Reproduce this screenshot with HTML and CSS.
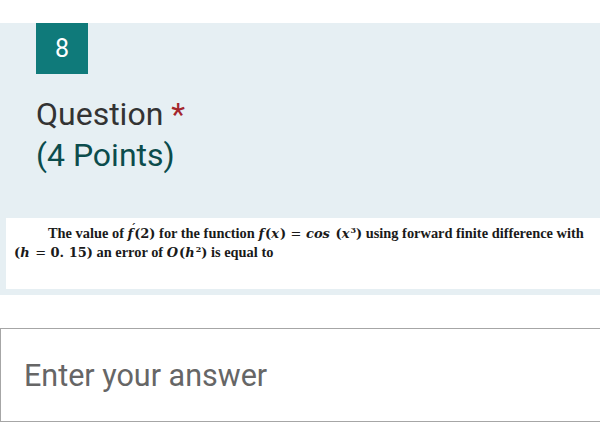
FILE: index.html
```html
<!DOCTYPE html>
<html>
<head>
<meta charset="utf-8">
<link rel="stylesheet" href="styles.css">
</head>
<body>
<div class="panel">
  <div class="badge">8</div>
  <div class="title">
    <div class="q">Question <span class="req">*</span></div>
    <div class="pts">(4 Points)</div>
  </div>
  <div class="image">
    <p class="math">The value of <span class="m"><i class="acc">f</i>(2)</span> for the function <span class="m"><i>f</i>(<i>x</i>) <span class="eq">=</span> <i>cos</i> (<i>x</i><sup>3</sup>)</span> using forward finite difference with<br><span class="m">(<i>h</i> <span class="eq">=</span> 0. 15)</span> an error of <span class="m"><i>O</i>(<i>h</i><sup>2</sup>)</span> is equal to</p>
  </div>
</div>
<div class="answer">Enter your answer</div>
</body>
</html>
```
FILE: styles.css
```css
html, body { margin: 0; padding: 0; background: #fff; }
body { padding-top: 23px; font-family: Roboto, "Noto Sans", sans-serif; overflow: hidden; }
.panel { background: #e6eff3; padding-bottom: 6px; }
.badge {
  margin-left: 36px; width: 52px; height: 51px;
  background: #0f7a7a; color: #fff;
  display: flex; align-items: center; justify-content: center;
  font-size: 25px;
}
.title { margin: 20px 0 0 36px; font-size: 32px; line-height: 41px; }
.q { color: #333333; }
.req { color: #a4262c; }
.pts { color: #0b4c4c; }
.image { margin: 42px 0 0 6px; height: 71px; background: #fff; }
.math {
  margin: 0; padding: 6px 0 0 8px;
  font-family: "Liberation Serif", serif; font-weight: bold; font-size: 14.4px;
  line-height: 18px; text-indent: 34px; color: #1a1a1a; white-space: nowrap;
}
.math .m { font-family: "DejaVu Serif", serif; font-size: 13px; }
.math .m i { padding-right: 1px; }
.math .acc { position: relative; }
.math .acc::after {
  content: "\00B4"; position: absolute; left: 3px; top: -6px;
  text-indent: 0; font-style: normal; font-size: 11px;
}
.math sup { font-size: 8px; line-height: 0; }
.math .eq { font-weight: normal; }
.answer {
  margin-top: 33px; height: 92px; width: calc(100% + 10px);
  border: 1px solid #a6a6a6; box-sizing: content-box;
  display: flex; align-items: center; padding-left: 23px;
  font-size: 30.5px; color: #666;
}
```
